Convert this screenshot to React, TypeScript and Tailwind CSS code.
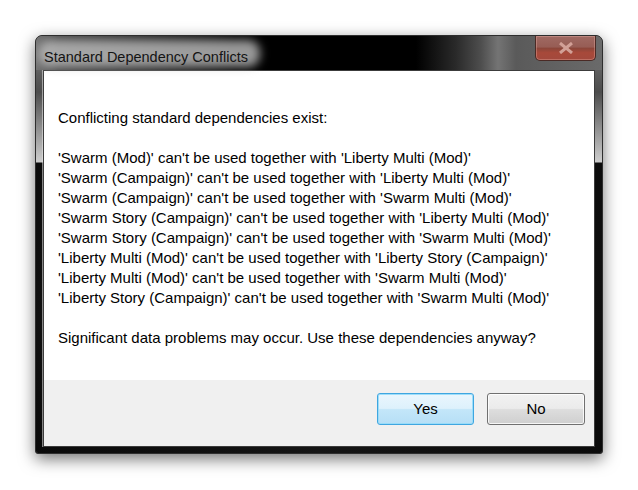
import React from "react";

const lines = [
  "'Swarm (Mod)' can't be used together with 'Liberty Multi (Mod)'",
  "'Swarm (Campaign)' can't be used together with 'Liberty Multi (Mod)'",
  "'Swarm (Campaign)' can't be used together with 'Swarm Multi (Mod)'",
  "'Swarm Story (Campaign)' can't be used together with 'Liberty Multi (Mod)'",
  "'Swarm Story (Campaign)' can't be used together with 'Swarm Multi (Mod)'",
  "'Liberty Multi (Mod)' can't be used together with 'Liberty Story (Campaign)'",
  "'Liberty Multi (Mod)' can't be used together with 'Swarm Multi (Mod)'",
  "'Liberty Story (Campaign)' can't be used together with 'Swarm Multi (Mod)'",
];

export default function App() {
  return (
    <div className="w-[638px] h-[490px] bg-white pt-[35px] pl-[35px] font-['Liberation_Sans',Arial,sans-serif] overflow-hidden">
      <div className="w-[568px] h-[419px] flex flex-col rounded-t-[7px] rounded-b-[3px] border border-[#2e2e2e] bg-[#0b0b0b] shadow-[0_5px_16px_rgba(0,0,0,0.55),inset_0_0_0_1px_rgba(255,255,255,0.55)] overflow-hidden">
        {/* Title bar */}
        <div className="relative h-[34px] flex items-start bg-[linear-gradient(to_right,#727272_0px,#4a4a4a_22px,#111_170px,#000_200px,#000_380px,#2a2a2a_420px,#4e4e4e_445px,#747474_462px,#5a5a5a_480px,#6a6a6a_566px)]">
          <div className="relative flex-1 h-full pl-[8px] pt-[9px]">
            <div className="absolute left-[2px] top-[4px] w-[222px] h-[27px] rounded-[12px] bg-[rgba(190,190,190,0.8)] blur-[5px]" />
            <span className="relative text-[14.5px] leading-[18px] text-[#141414]">
              Standard Dependency Conflicts
            </span>
          </div>
          <div className="mr-[6px] w-[61px] h-[25px] rounded-b-[5px] border border-t-0 border-[#4a2a25] shadow-[inset_0_0_0_1px_rgba(255,200,190,0.3)] bg-[linear-gradient(to_bottom,#a06a63_0%,#975d55_45%,#8c463a_52%,#a8493a_70%,#a2493d_100%)] flex items-center justify-center">
            <svg width="16" height="12" viewBox="0 0 16 12">
              <path d="M2 1 L14 11 M14 1 L2 11" stroke="#d2a097" strokeWidth="3" strokeLinecap="butt" />
            </svg>
          </div>
        </div>
        {/* Middle */}
        <div className="flex flex-1">
          <div className="w-[7px] bg-[linear-gradient(to_bottom,#5e5e5e_0px,#4c4c4c_22px,#cdcdcd_92px,#0c0c0c_93px,#111_250px,#0a0a0a_100%)]" />
          <div className="w-[552px] flex flex-col bg-white border border-[#3c3c3c] shadow-[0_0_0_1px_rgba(230,230,230,0.55)]">
            <div className="flex-1 pt-[37px] pl-[14px] text-[15px] leading-[20px] text-black">
              <div>Conflicting standard dependencies exist:</div>
              <div className="mt-[20px] flex flex-col">
                {lines.map((l, i) => (
                  <div key={i} className="whitespace-pre">{l}</div>
                ))}
              </div>
              <div className="mt-[20px]">Significant data problems may occur. Use these dependencies anyway?</div>
            </div>
            <div className="h-[66px] bg-[#f0f0f0] flex justify-end items-start pt-[13px] pr-[9px] gap-[13px]">
              <button className="w-[97px] h-[32px] rounded-[3px] border border-[#3fa6e0] shadow-[inset_0_0_0_1px_rgba(150,220,250,0.9)] bg-[linear-gradient(to_bottom,#eaf6fd_0%,#ddf1fc_48%,#c3e6f9_52%,#b6dff6_100%)] text-[15px] text-black flex items-center justify-center">
                Yes
              </button>
              <button className="w-[98px] h-[32px] rounded-[3px] border border-[#707070] shadow-[inset_0_0_0_1px_rgba(255,255,255,0.8)] bg-[linear-gradient(to_bottom,#f2f2f2_0%,#ebebeb_48%,#dddddd_52%,#cfcfcf_100%)] text-[15px] text-black flex items-center justify-center">
                No
              </button>
            </div>
          </div>
          <div className="w-[7px] bg-[linear-gradient(to_bottom,#5e5e5e_0px,#4c4c4c_22px,#cdcdcd_92px,#0c0c0c_93px,#111_250px,#0a0a0a_100%)]" />
        </div>
        <div className="h-[6px] bg-[linear-gradient(to_right,#0a0a0a,#151515_50%,#0a0a0a)]" />
      </div>
    </div>
  );
}
